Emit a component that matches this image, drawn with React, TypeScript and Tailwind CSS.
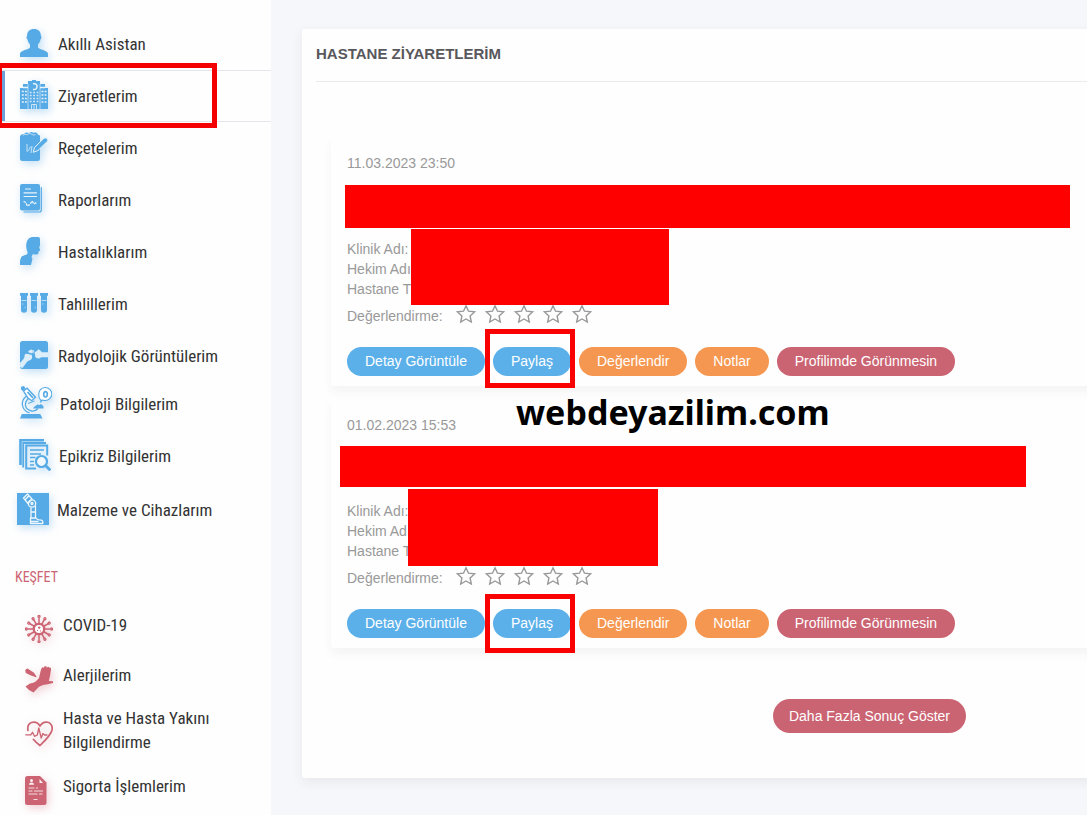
import type { ReactNode } from "react";

type NavItem = { label: string; icon: ReactNode; row: string; active?: boolean };

const BLUE = "#56aae5";
const ROSE = "#cc6473";

const VIRUS_ANGLES = [0, 30, 60, 90, 120, 150, 180, 210, 240, 270, 300, 330];

function PersonIcon() {
  return (
    <svg viewBox="0 0 28 28" className="size-7" fill={BLUE}>
      <path d="M14 0c4.200 0 7 2.600 6.900 7 .8.300.8 2.300-.4 3.500-.5 2.600-1.500 3.900-2.500 5v3.300c1.500 1.800 9 2.300 10 5.700V28H0v-3.500c1-3.400 8.500-3.900 10-5.700v-3.300c-1-1.100-2-2.400-2.500-5C6.300 9.300 6.300 7.300 7.100 7 7 2.600 9.800 0 14 0Z" />
    </svg>
  );
}

function HospitalIcon() {
  return (
    <svg viewBox="0 0 28 29" className="w-7 h-[29px]" fill={BLUE}>
      <path d="M8 1h4V0h4v1h4v3h5v4h3v21H0V8h3V4h5Z" />
      <path d="M13 3.800q4-.8 4 2.700t-4 3" fill="none" stroke="#e8f5fd" strokeWidth="1.500" />
      <path d="M8 4v25M20 4v25" stroke="#d5ebfa" strokeWidth=".7" />
      <path d="M9.800 12.500h8.600M9.800 15.500h8.600M9.800 18.500h8.600M9.800 21.500h8.600" stroke="#d5ebfa" strokeWidth="1.300" strokeDasharray="1.800 1.600" />
      <path d="M1.800 11.500h5M1.800 15h5M1.800 18.500h5M1.800 22h5M21.500 11.500h5M21.500 15h5M21.500 18.500h5M21.500 22h5" stroke="#e8f5fd" strokeWidth="1.500" strokeDasharray="2 1.200" />
      <path d="M3 7.500h5M20 7.500h5" stroke="#e8f5fd" strokeWidth="1.500" />
      <path d="M11.500 29v-4.500h5V29M14 24.500V29" fill="none" stroke="#d5ebfa" strokeWidth=".9" />
    </svg>
  );
}

function PrescriptionIcon() {
  return (
    <svg viewBox="0 0 28 29" className="w-7 h-[29px]" fill={BLUE}>
      <path d="M1.500 2.500 4 2l2-1.500L9 1l2-1 3 .8L16 .3 18.500 3l1.500.5v9V26.500q0 2.500-2.500 2.500H2.500Q0 29 0 26.500V4Z" />
      <path d="M3 3.500q1-1.500 2.500-1t3-.6 3 .3 4 .5" fill="none" stroke="#d5ebfa" strokeWidth=".8" />
      <path d="M7 19.500V12M12 14l-1 7M7 19.500q2.500-1 3.500-5" fill="none" stroke="#c4e4f8" strokeWidth="1" />
      <path d="m14.500 15.500 9.500-9.300q2.200-1 3.500.8.800 1.200 0 2.200L18 18.500l-4.800 1.800Z" stroke="#e8f5fd" strokeWidth="1" />
    </svg>
  );
}

function ReportIcon() {
  return (
    <svg viewBox="0 0 28 29" className="w-7 h-[29px]" fill={BLUE}>
      <rect width="20" height="26.500" rx="2" />
      <path d="M21.300 3.500V26q0 2-2 2H4" fill="none" stroke={BLUE} strokeWidth="1.200" strokeLinecap="round" />
      <path d="M5.500 5h5M4 8.800h12.500M4 12.500h12.500" stroke="#e8f5fd" strokeWidth="1.200" strokeLinecap="round" />
      <path d="M3.500 17.500 6 18.500 7 22l3-1.500 2-3.500 2 3 2.500-1.500" fill="none" stroke="#e8f5fd" strokeWidth="1.300" strokeDasharray="2.500 1" />
    </svg>
  );
}

function HeadIcon() {
  return (
    <svg viewBox="0 0 28 28" className="size-7" fill={BLUE}>
      <path d="M12.500 0H18q2 0 2 2v6.500l-.8 1.500 1 3.500-1.500.8-.5 2.500q-.4.900-2.200.7l-3.500-.2-1 3.200 1 1-1.500 6.500H0q-.3-5.500 1.200-7.800c1.300-2 5.300-1.700 6.300-3.700.7-1.500-1.500-3.500-1.300-8C6.400 3.500 9 0 12.500 0Z" />
    </svg>
  );
}

function TubesIcon() {
  return (
    <svg viewBox="0 0 28 20" className="w-7 h-5" fill={BLUE}>
      <path d="M0 0h8v2.800H7V17q0 2.800-3 2.800T1 17V2.800H0ZM10 0h8v2.800h-1V17q0 2.800-3 2.800T11 17V2.800h-1ZM20 0h8v2.800h-1V17q0 2.800-3 2.800T21 17V2.800h-1Z" />
      <path d="M1.500 7.500h5M11.500 7.500h5M21.500 7.500h5" stroke="#b9e0f8" strokeWidth="1" />
      <path d="M2.800 10v2M22.800 10v2M5.200 13.500v2M15.200 13.500v2" stroke="#a5d5f4" strokeWidth=".8" />
    </svg>
  );
}

function JointIcon() {
  return (
    <svg viewBox="0 0 28 28" className="size-7">
      <rect width="28" height="28" rx="2.500" fill={BLUE} />
      <path d="M0 26v-4l3.500-4q1.500-2 1-4 1.500-2 3.500-1l2 .5q3 .5 2 2.500.5 2-1.500 3-3 .5-4 2.500L2.500 27Z" fill="#dceefa" />
      <path d="M15 13.500q-.8-3 2-3.500.5-1.800 2.500-1.300l2.500 2.500h6v5h-7q-1.500 1.800-3.500 1-2.500.2-2.500-3.700Z" fill="#dceefa" />
      <path d="M8.500 11q1-2.500 3.500-2 1.800 1.500 0 3ZM13.500 9l.5 3.500" fill="#dceefa" stroke="#dceefa" strokeWidth=".8" />
    </svg>
  );
}

function MicroscopeIcon() {
  return (
    <svg viewBox="0 0 32 33" className="w-8 h-[33px]" fill={BLUE}>
      <path d="M0 32.500 1.800 28h18.400l2.300 4.500Z" />
      <path d="m1 .8 3-.8 1.500 2.500-2.500 2.500-2-1.500Z" />
      <path d="M3.500 5 7 2.200l8.500 9-3.800 3.500-4-3Z" fill="#fff" stroke={BLUE} strokeWidth="1.400" />
      <path d="M7.500 6 13 11.800" stroke={BLUE} strokeWidth="1.800" />
      <path d="M6 10.500Q1.500 14 2.500 19.500T9.500 27M8.500 12.500Q5 15.500 5.500 19.500t6 5.500q4 .5 6.500-2.500" fill="none" stroke={BLUE} strokeWidth="1.300" />
      <path d="M13 22.500h10.500v-2.300L21 18l-1.500 1-2-.5-3 2Z" />
      <path d="M8 17.500 14.500 15" stroke={BLUE} strokeWidth="1" />
      <path d="M21 14.500q-2.500-2-2.200-6A6.500 6.500 0 1 1 25 14.500q-2-.2-2.800-.6l-1.700 2.600Z" fill="#fff" stroke={BLUE} strokeWidth="1.100" />
      <ellipse cx="25.500" cy="8.300" rx="1.800" ry="2.700" fill="none" stroke={BLUE} strokeWidth="1.600" />
    </svg>
  );
}

function RecordSearchIcon() {
  return (
    <svg viewBox="0 0 32 32" className="size-8" fill="none" stroke={BLUE}>
      <path d="M1.500 26V1.300H25" strokeWidth="2.600" />
      <path d="M4.200 28.500V4H27" strokeWidth="1.800" />
      <path d="M17 29.500H7.200V6.500h21v10" strokeWidth="2" />
      <path d="M11 11h14M11 15h11M11 18.500h5.500M11 22.500h4M11 26h4" strokeWidth="1.600" />
      <circle cx="22.500" cy="22.500" r="5.500" strokeWidth="2.200" fill="#f2f9fe" />
      <path d="m26.500 26.500 4.800 4.800" strokeWidth="2.800" />
    </svg>
  );
}

function ProsthesisIcon() {
  return (
    <svg viewBox="0 0 32 32" className="size-8">
      <path fill={BLUE} d="M0 0h32v32H0z" />
      <g fill="none" stroke="#eef8ff" strokeWidth="1.300" strokeLinejoin="round">
        <path d="M6.500 5 10.500 1l4.500 5-4 4.500ZM8 7l4-4.500" />
        <circle cx="15" cy="10.500" r="3.700" />
        <circle cx="15" cy="10.500" r="1" />
        <path d="M14 14.500V25M18.500 13v12M14 19h4.500" />
        <path d="M13.500 25H19q1 2 5.500 2.200 1.500.5 1.300 3.300H13.500ZM13.500 28.500h8" />
      </g>
    </svg>
  );
}

function VirusIcon() {
  return (
    <svg viewBox="0 0 28 28" className="size-7" fill="none" stroke={ROSE}>
      {VIRUS_ANGLES.map((a) => (
        <g key={a} transform={`rotate(${a} 14 14)`}>
          <path d="M14 9V3" strokeWidth="1.500" />
          <circle cx="14" cy={a % 90 === 0 ? 1.400 : 2.200} r="1" strokeWidth="1.300" />
        </g>
      ))}
      <circle cx="14" cy="14" r="5.200" strokeWidth="2.300" fill="#fff" />
      <path d="M13 12.500h2.500M14.200 11.500v2.500M12 15.500h1M15 16h1" strokeWidth="1.100" />
    </svg>
  );
}

function AllergyIcon() {
  return (
    <svg viewBox="0 0 28 27" className="w-7 h-[27px]" fill={ROSE}>
      <path d="M.3 4.500Q.5 2.800 2.500 2.500L9 6.800l2.500 3.700-.5.800-5-1.800-5.200-2.500Z" />
      <path d="m14 12 2-8.500 1.200-2.200 1.500.4.900-1.500 1.700.1.500 1.200L23.500.8l.9 1 1.200-.3.500 1.500-1 6.500-1.300 5.500 4.200.2V17l-5.500 1.300-4.500.7-4 1.800L8.500 26.500Q4 25 .5 20.500L5 17.500q5.500-.5 9-5.500Z" />
    </svg>
  );
}

function HeartIcon() {
  return (
    <svg viewBox="0 0 28 26" className="w-7 h-[26px]" fill="none" stroke={ROSE} strokeWidth="1.700" strokeLinejoin="round" strokeLinecap="round">
      <path d="M3 9.500Q1.800 3.500 6.500 1.500 12 0 15 5q3-5 8-3.700 5 2 4 7.700-1 5-12 15.500Q10.500 21 8.500 18.500" />
      <path d="M.8 13.800h5l1.700-2.500 2 4 2.800-1.300L13.800 7l2.400 10 1.700-4.500 1.600 1.500h2.500" strokeWidth="1.300" />
    </svg>
  );
}

function InsuranceIcon() {
  return (
    <svg viewBox="0 0 28 29" className="w-7 h-[29px]">
      <path fill={ROSE} d="M2 0h13l6.500 6.500V26.500Q21.500 29 19 29H2.500Q0 29 0 26.500V2.500Q0 0 2 0Z" />
      <g fill="#fbeef0">
        <circle cx="6.500" cy="4.500" r="1.500" />
        <path d="M3.800 8.800q.4-2.300 2.700-2.300t2.700 2.300ZM14.500 3v4h3.500Z" />
      </g>
      <path d="M3.500 12h6M11 12h2M3.500 15h4M9 15h9M3.500 18h9M14 18h3.500M8.500 23.500h4" stroke="#f6dde0" strokeWidth="1" />
    </svg>
  );
}

const nav: NavItem[] = [
  { label: "Akıllı Asistan", icon: <PersonIcon />, row: "h-[52px] pl-5 gap-[10px]" },
  { label: "Ziyaretlerim", icon: <HospitalIcon />, row: "h-[52px] pl-5 gap-[10px]", active: true },
  { label: "Reçetelerim", icon: <PrescriptionIcon />, row: "h-[52px] pl-5 gap-[10px]" },
  { label: "Raporlarım", icon: <ReportIcon />, row: "h-[52px] pl-5 gap-[10px]" },
  { label: "Hastalıklarım", icon: <HeadIcon />, row: "h-[52px] pl-5 gap-[10px]" },
  { label: "Tahlillerim", icon: <TubesIcon />, row: "h-[52px] pl-5 gap-[10px]" },
  { label: "Radyolojik Görüntülerim", icon: <JointIcon />, row: "h-[52px] pl-5 gap-[10px]" },
  { label: "Patoloji Bilgilerim", icon: <MicroscopeIcon />, row: "h-[44px] pl-5 gap-2" },
  { label: "Epikriz Bilgilerim", icon: <RecordSearchIcon />, row: "h-[60px] pl-[19px] gap-2" },
  { label: "Malzeme ve Cihazlarım", icon: <ProsthesisIcon />, row: "h-[48px] pl-[17px] gap-2" },
];

const explore: NavItem[] = [
  { label: "COVID-19", icon: <VirusIcon />, row: "h-[50px]" },
  { label: "Alerjilerim", icon: <AllergyIcon />, row: "h-[50px]" },
  { label: "Hasta ve Hasta Yakını Bilgilendirme", icon: <HeartIcon />, row: "h-[60px]" },
  { label: "Sigorta İşlemlerim", icon: <InsuranceIcon />, row: "h-[52px]" },
];

const visits = [
  {
    date: "11.03.2023 23:50",
    titleMask: "left-[14px] top-[48px] w-[725px] h-[43px]",
    detailMask: "left-[80px] top-[92px] w-[258px] h-[76px]",
    frame: "-top-[18px] -bottom-3",
  },
  {
    date: "01.02.2023 15:53",
    titleMask: "left-[9px] top-[47px] w-[686px] h-[41px]",
    detailMask: "left-[77px] top-[90px] w-[250px] h-[77px]",
    frame: "-top-[15px] -bottom-[15px]",
  },
];

function Star() {
  return (
    <svg viewBox="0 0 20 19" className="w-5 h-[19px]" fill="none" stroke="#999" strokeWidth="1.400" strokeLinejoin="miter">
      <path d="m10 1.800 2.500 5.400 6 .7-4.400 4.100 1.200 6-5.300-3-5.300 3 1.200-6L1.500 7.900l6-.7Z" />
    </svg>
  );
}

function Pill({ children, tone }: { children: ReactNode; tone: string }) {
  return <button type="button" className={`h-[29px] rounded-full px-[18px] pb-[2px] text-[14px] leading-5 whitespace-nowrap text-white ${tone}`}>{children}</button>;
}

function VisitCard({ visit }: { visit: (typeof visits)[number] }) {
  return (
    <article className="relative rounded-[3px] bg-[#fefefe] px-4 pt-4 pb-[10px] text-[14px] leading-5 text-[#999] shadow-[0_6px_10px_rgba(60,65,80,0.05)]">
      <time className="block">{visit.date}</time>
      <div className="mt-[66px]">
        <p>Klinik Adı:</p>
        <p>Hekim Adı:</p>
        <p>Hastane Türü:</p>
      </div>
      <div className="mt-[2px] flex h-6 items-center">
        <span className="pt-[6px]">Değerlendirme:</span>
        <div className="ml-[13px] flex gap-[9px]">
          {[1, 2, 3, 4, 5].map((n) => (
            <button key={n} type="button" aria-label={`${n} yıldız`}><Star /></button>
          ))}
        </div>
      </div>
      <div className="mt-[22px] flex gap-2">
        <Pill tone="bg-[#5bb0ea]">Detay Görüntüle</Pill>
        <div className="relative flex">
          <Pill tone="bg-[#5bb0ea]">Paylaş</Pill>
          <div className={`pointer-events-none absolute -left-2 -right-1 border-[5px] border-[#fa0000] ${visit.frame}`} />
        </div>
        <Pill tone="bg-[#f59750]">Değerlendir</Pill>
        <Pill tone="bg-[#f59750]">Notlar</Pill>
        <Pill tone="bg-[#cb6472]">Profilimde Görünmesin</Pill>
      </div>
      <div className={`absolute bg-[#ff0000] ${visit.titleMask}`} />
      <div className={`absolute bg-[#ff0000] ${visit.detailMask}`} />
    </article>
  );
}

function Sidebar() {
  return (
    <aside className="w-[271px] shrink-0 bg-[#fefefe] pt-[18px] font-['Roboto_Condensed','Roboto',sans-serif] text-[17px] leading-6 text-[#333]">
      <nav>
        {nav.map((item) => (
          <a key={item.label} href="#" className={`relative flex items-center ${item.row} ${item.active ? "border-y border-[#e4e5ea]" : ""}`}>
            {item.active && <span className="absolute inset-y-0 left-0 w-[5px] bg-[#6d9fd8]" />}
            <span className="shrink-0 pb-[3px] drop-shadow-[2px_3px_4px_rgba(86,170,229,0.35)]">{item.icon}</span>
            {item.label}
            {item.active && <span className="pointer-events-none absolute -top-2 -bottom-[7px] -left-[3px] w-[220px] border-[5px] border-[#f40000]" />}
          </a>
        ))}
      </nav>
      <h2 className="mt-[31px] pl-[15px] text-[14px] font-normal text-[#cc6473]">KEŞFET</h2>
      <nav className="mt-[11px]">
        {explore.map((item) => (
          <a key={item.label} href="#" className={`flex items-center gap-[10px] pr-12 pl-[25px] ${item.row}`}>
            <span className="shrink-0 pt-2 drop-shadow-[2px_3px_4px_rgba(204,100,115,0.3)]">{item.icon}</span>
            {item.label}
          </a>
        ))}
      </nav>
    </aside>
  );
}

export default function App() {
  return (
    <div className="flex h-screen overflow-hidden bg-[#f6f7fa] font-['Liberation_Sans',Arial,sans-serif]">
      <Sidebar />
      <main className="min-w-0 flex-1 overflow-hidden pt-[29px] pl-[31px]">
        {/* the panel runs on past the right edge of the window */}
        <section className="-mr-[350px] rounded-[3px] bg-[#fefefe] px-[14px] pt-[13px] pb-[45px] shadow-[0_4px_12px_rgba(60,65,80,0.08)]">
          <h1 className="border-b border-[#ebebed] pb-[15px] text-[15px] leading-6 font-bold text-[#58585c]">HASTANE ZİYARETLERİM</h1>
          <div className="relative mt-[55px] flex flex-col gap-[13px] px-[15px]">
            {visits.map((visit) => (
              <VisitCard key={visit.date} visit={visit} />
            ))}
            <div className="pointer-events-none absolute top-[251px] left-[200px] font-['Noto_Sans','Open_Sans',sans-serif] text-[34px] leading-[48px] font-bold text-black">webdeyazilim.com</div>
          </div>
          <div className="mt-[51px] flex justify-center">
            <button type="button" className="h-[34px] rounded-full bg-[#cb6472] px-4 text-[14px] text-white">Daha Fazla Sonuç Göster</button>
          </div>
        </section>
      </main>
    </div>
  );
}
